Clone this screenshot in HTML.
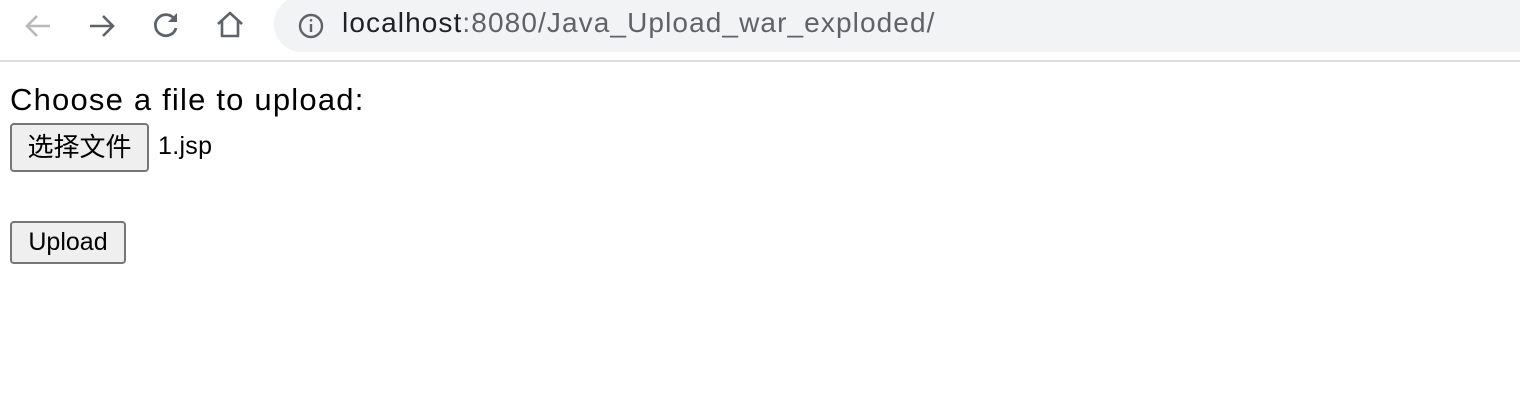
<!DOCTYPE html>
<html><head><meta charset="utf-8"><style>
body{margin:0;width:1520px;height:406px;background:#fff;font-family:"Liberation Sans","Noto Sans CJK SC",sans-serif;position:relative;overflow:hidden}
.bar{position:absolute;left:0;top:0;width:1520px;height:60px;background:#fff;border-bottom:2px solid #dcdcdc}
.omni{position:absolute;left:274px;top:-4px;width:1300px;height:56px;background:#f1f3f4;border-radius:28px}
.url{position:absolute;left:342px;top:7px;font-size:28px;letter-spacing:1.1px;color:#202124}
.url span{color:#5f6368}
svg{position:absolute}
.t{position:absolute;left:10px;font-size:31px;letter-spacing:1.2px;color:#000}
.btn{position:absolute;left:10px;background:#efefef;border:2px solid #767676;border-radius:4px;box-sizing:border-box;font-size:24px;color:#000;text-align:center}
</style></head><body>
<div class="bar">
<svg style="left:22px;top:10px" width="32" height="32" viewBox="0 0 32 32" fill="none" stroke="#b8b8b8" stroke-width="2.6"><path d="M28 16H5M15 6L5 16l10 10"/></svg>
<svg style="left:86px;top:10px" width="32" height="32" viewBox="0 0 32 32" fill="none" stroke="#5f6368" stroke-width="2.6"><path d="M4 16h23M17 6l10 10-10 10"/></svg>
<svg style="left:150px;top:9px" width="32" height="32" viewBox="0 0 32 32" fill="none" stroke="#5f6368" stroke-width="2.8"><path d="M25 11A10.5 10.5 0 1 0 26 19"/><path d="M27 4v9h-9z" fill="#5f6368" stroke="none"/></svg>
<svg style="left:214px;top:9px" width="32" height="32" viewBox="0 0 32 32" fill="none" stroke="#5f6368" stroke-width="2.6" stroke-linejoin="round"><path d="M4 15L16 4l12 11M8 12v15h16V12"/></svg>
<div class="omni"></div>
<svg style="left:297px;top:12px" width="28" height="28" viewBox="0 0 28 28" fill="none" stroke="#5f6368" stroke-width="2.4"><circle cx="14" cy="14" r="11"/><path d="M14 12v8"/><circle cx="14" cy="8.3" r="1.3" fill="#5f6368" stroke="none"/></svg>
<div class="url">localhost<span>:8080/Java_Upload_war_exploded/</span></div>
</div>
<div class="t" style="top:82px">Choose a file to upload:</div>
<div class="btn" style="top:123px;width:139px;height:49px;line-height:45px;font-size:26px">选择文件</div>
<div style="position:absolute;left:158px;top:132px;font-size:25px;letter-spacing:0.3px">1.jsp</div>
<div class="btn" style="top:221px;width:116px;height:43px;line-height:39px;font-size:25px">Upload</div>
</body></html>
